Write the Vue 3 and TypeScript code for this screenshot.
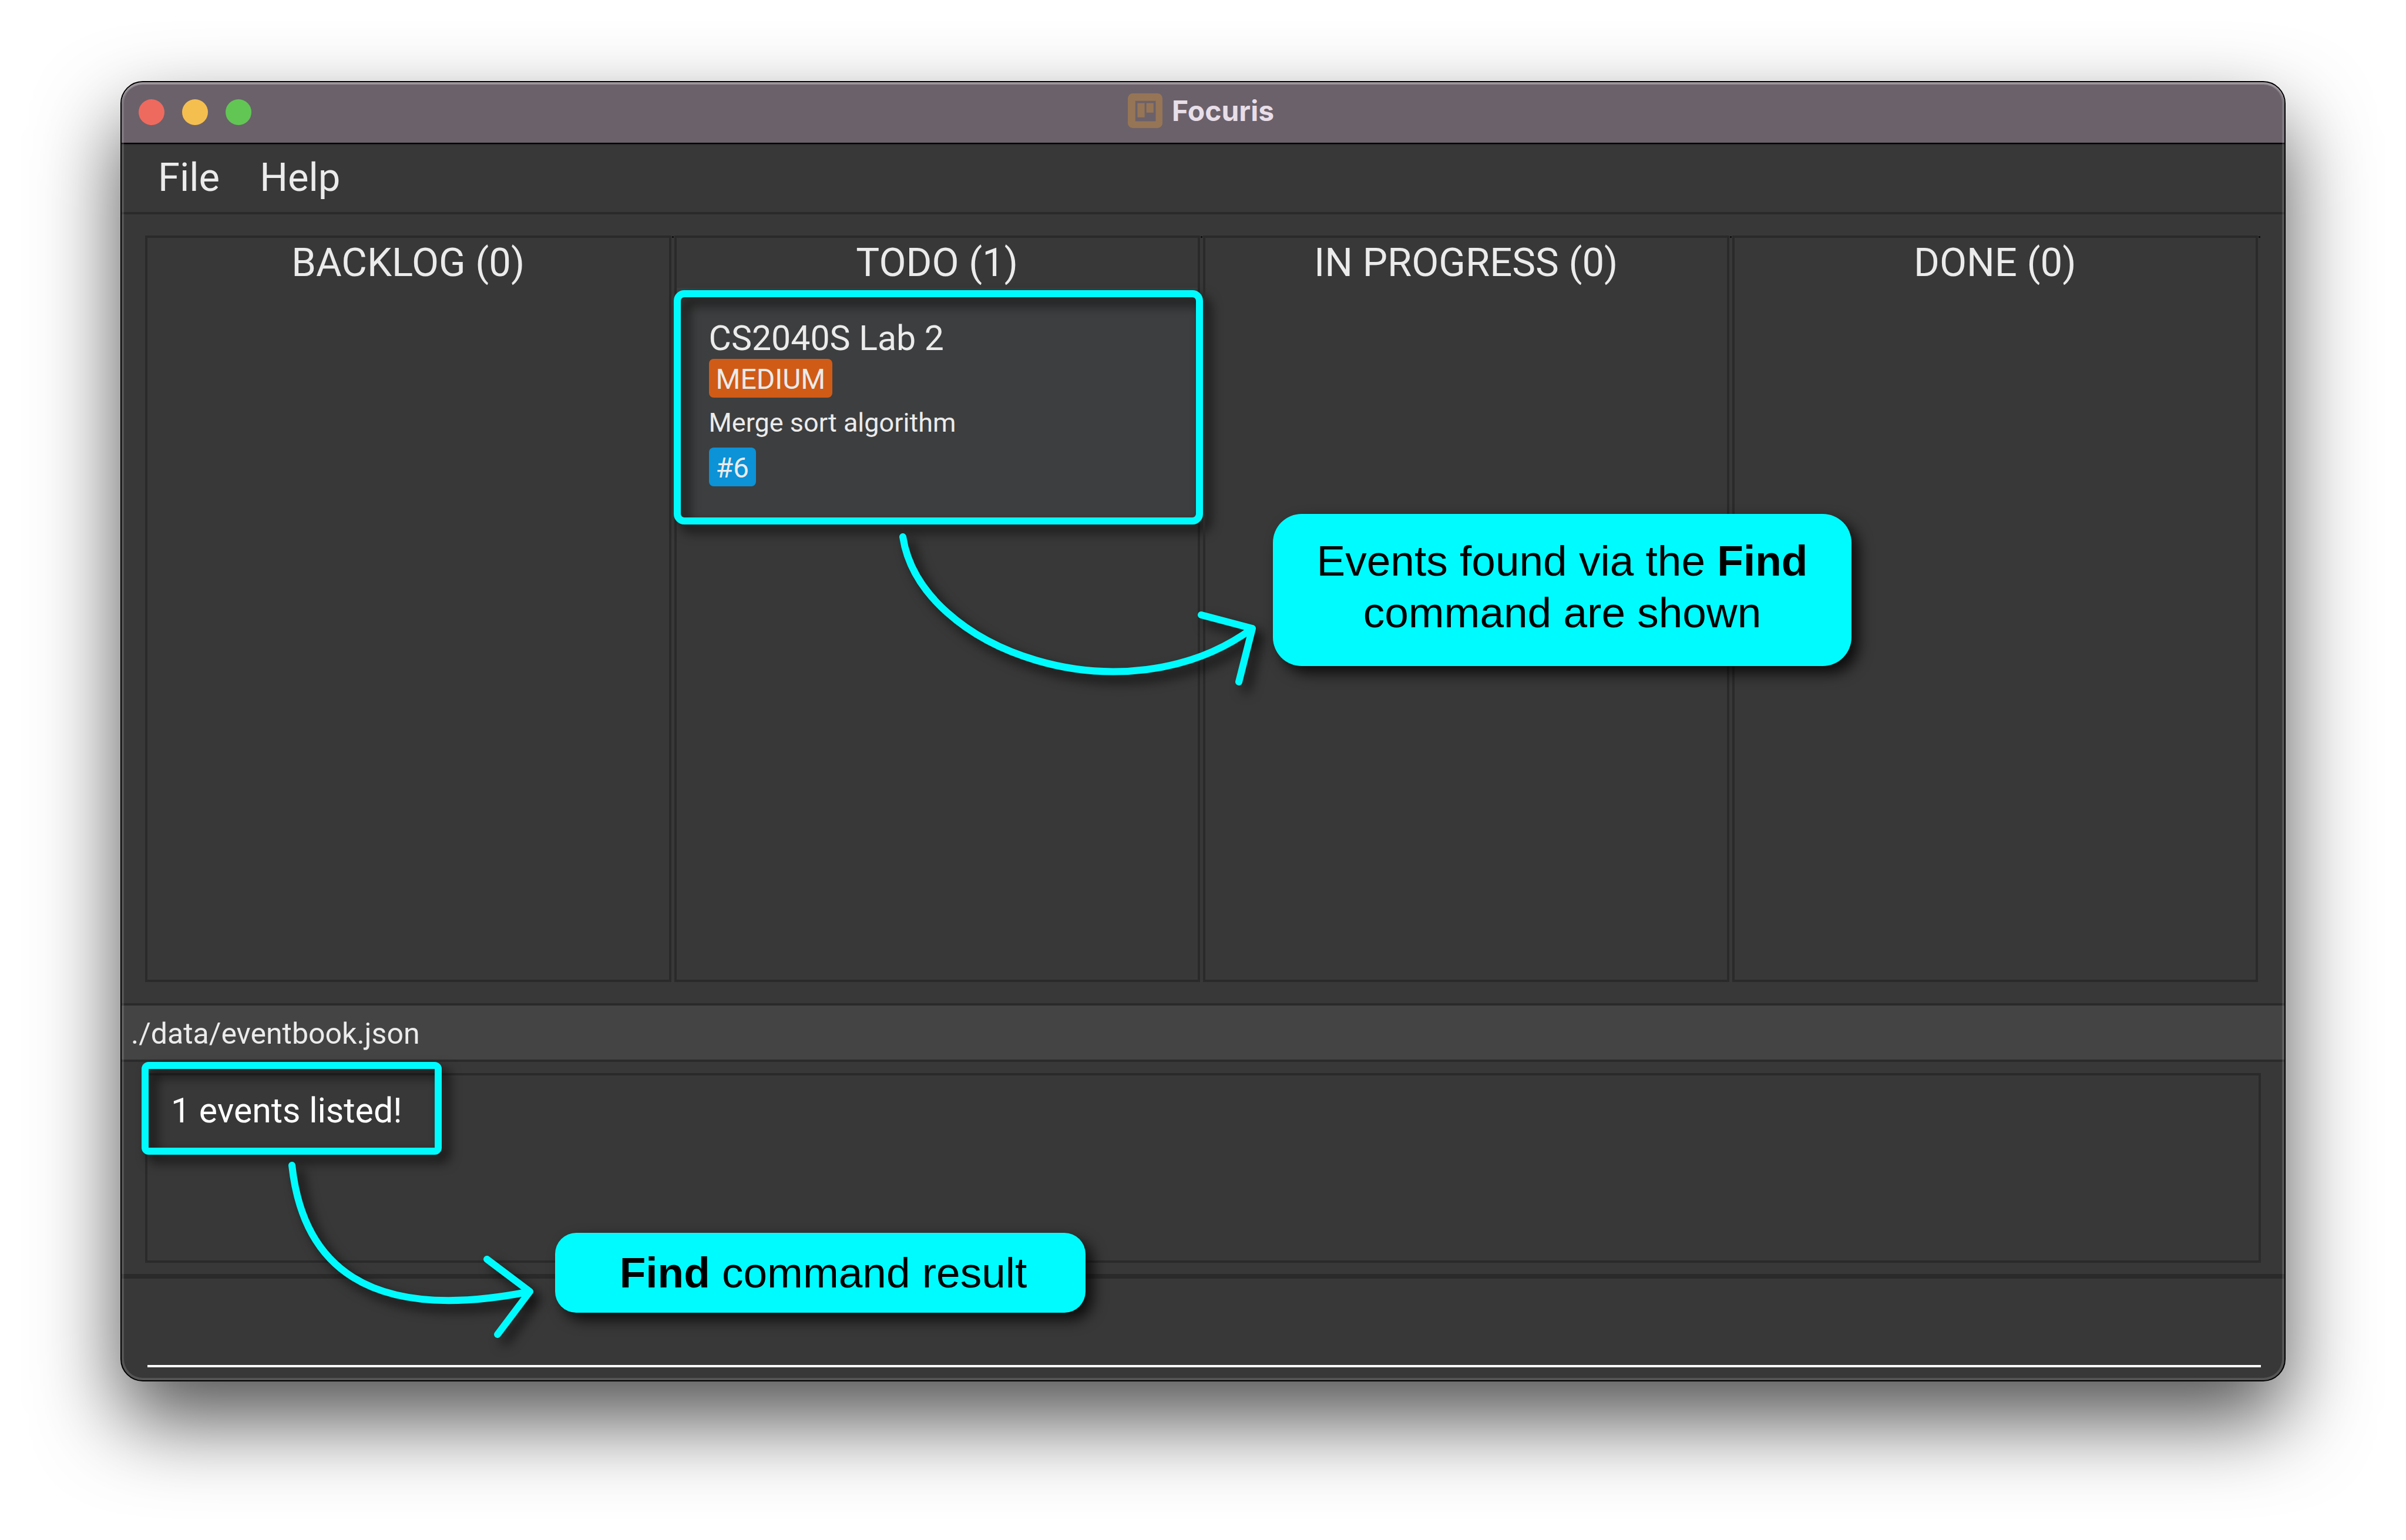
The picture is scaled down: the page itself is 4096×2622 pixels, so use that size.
<script setup lang="ts">
import { computed, ref } from 'vue'

interface EventCard {
  title: string
  priority: string
  description: string
  tags: string[]
}

interface Column {
  name: string
  events: EventCard[]
}

const menus = ['File', 'Help']
const windowControls = [
  { name: 'Close', tone: 'close' },
  { name: 'Minimise', tone: 'minimise' },
  { name: 'Zoom', tone: 'zoom' },
]

const columns = ref<Column[]>([
  { name: 'BACKLOG', events: [] },
  {
    name: 'TODO',
    events: [
      {
        title: 'CS2040S Lab 2',
        priority: 'MEDIUM',
        description: 'Merge sort algorithm',
        tags: ['#6'],
      },
    ],
  },
  { name: 'IN PROGRESS', events: [] },
  { name: 'DONE', events: [] },
])

const eventCount = computed(() => columns.value.reduce((sum, c) => sum + c.events.length, 0))
const result = computed(() => `${eventCount.value} events listed!`)
const savePath = './data/eventbook.json'
const command = ref('')
</script>

<template>
  <div class="desktop">
    <main class="window">
      <header class="titlebar">
        <div class="controls">
          <button
            v-for="control in windowControls"
            :key="control.tone"
            type="button"
            class="control"
            :class="control.tone"
            :aria-label="control.name"
          ></button>
        </div>
        <h1 class="title">
          <svg class="app-icon" viewBox="0 0 97 97" aria-hidden="true">
            <path
              fill="#967556"
              fill-rule="evenodd"
              d="M14 0H83A14 14 0 0 1 97 14V83A14 14 0 0 1 83 97H14A14 14 0 0 1 0 83V14A14 14 0 0 1 14 0ZM21 21V78H78V21ZM27 27H47V67H27ZM52 27H72V54H52Z"
            />
          </svg>
          Focuris
        </h1>
      </header>

      <nav class="menubar">
        <button v-for="menu in menus" :key="menu" type="button" class="menu">{{ menu }}</button>
      </nav>

      <div class="board">
        <section v-for="column in columns" :key="column.name" class="cell">
          <div class="column">
            <h2 class="column-title">{{ column.name }} ({{ column.events.length }})</h2>
            <article v-for="event in column.events" :key="event.title" class="card">
              <h3 class="card-title">{{ event.title }}</h3>
              <span class="badge priority">{{ event.priority }}</span>
              <p class="description">{{ event.description }}</p>
              <span v-for="tag in event.tags" :key="tag" class="badge tag">{{ tag }}</span>
              <span class="highlight card-highlight"></span>
            </article>
          </div>
        </section>
      </div>

      <footer class="statusbar">{{ savePath }}</footer>

      <section class="result">
        <textarea class="result-text" aria-label="Command result" readonly :value="result"></textarea>
        <span class="highlight result-highlight"></span>
      </section>

      <form class="command" @submit.prevent>
        <input v-model="command" class="command-input" type="text" aria-label="Command" />
      </form>

      <svg class="arrow card-arrow" viewBox="0 0 640 280" aria-hidden="true">
        <path d="M20 20C50 214 398 335 615 176M528 153L615 176L592 267" />
      </svg>
      <p class="callout card-callout">Events found via the <b>Find</b><br />command are shown</p>

      <svg class="arrow result-arrow" viewBox="0 0 440 320" aria-hidden="true">
        <path d="M20 20C38 186 144 291 425 235M352 180L425 235L370 308" />
      </svg>
      <p class="callout result-callout"><b>Find</b> command result</p>
    </main>
  </div>
</template>

<style>
body {
  margin: 0;
  background: #fff;
}
</style>

<style scoped>
.desktop {
  box-sizing: border-box;
  display: flex;
  min-height: 100vh;
  padding: 138px 205px 270px;
  font-family: Roboto, 'Liberation Sans', sans-serif;
  color: #ebebeb;
}

.desktop *,
.desktop *::before,
.desktop *::after {
  box-sizing: border-box;
}

h1,
h2,
h3,
p {
  margin: 0;
  font-weight: 400;
}

button {
  padding: 0;
  border: 0;
  background: none;
  color: inherit;
  font: inherit;
}

.window {
  position: relative;
  display: flex;
  flex: 1;
  flex-direction: column;
  border: 2px solid #000;
  border-radius: 38px;
  background: #383838;
  box-shadow: 0 66px 142px rgba(0, 0, 0, 0.68);
}

/* Light rim just inside the window edge. */
.window::after {
  content: '';
  position: absolute;
  inset: 0;
  border-radius: 36px;
  box-shadow:
    inset 0 2px 0 rgba(255, 255, 255, 0.16),
    inset 0 4px 0 rgba(255, 255, 255, 0.16),
    inset 0 0 0 4px rgba(255, 255, 255, 0.14);
  pointer-events: none;
}

.titlebar {
  display: grid;
  grid-template-columns: 1fr auto 1fr;
  align-items: center;
  height: 105px;
  padding: 0 36px 2px 29px;
  border-bottom: 2px solid #000;
  border-radius: 36px 36px 0 0;
  background: #6b616a;
}

.controls {
  display: flex;
  gap: 30px;
}

.control {
  width: 44px;
  height: 44px;
  border-radius: 50%;
}

.close {
  background: #ee6a5f;
}

.minimise {
  background: #f5bf4f;
}

.zoom {
  background: #62c655;
}

.title {
  display: flex;
  align-items: center;
  gap: 16px;
  padding-bottom: 4px;
  color: #e8dee8;
  font-family: Inter, 'Liberation Sans', sans-serif;
  font-size: 48px;
  font-weight: 700;
  line-height: 60px;
}

.app-icon {
  width: 59px;
  height: 59px;
}

.menubar {
  display: flex;
  align-items: center;
  gap: 68px;
  height: 120px;
  padding: 0 62px 4px;
  border-top: 2px solid #2a2a2a;
  border-bottom: 4px solid #2a2a2a;
}

.menu {
  font-size: 67px;
  line-height: 84px;
}

.board {
  display: flex;
  flex: 1;
  padding: 36px 40px;
}

.cell {
  position: relative;
  display: flex;
  flex: 1;
  padding-right: 5px;
}

/* Scroll-pane corner mark. */
.cell::after {
  content: '';
  position: absolute;
  top: 1px;
  right: 1px;
  width: 3px;
  height: 3px;
  background: #111;
}

.column {
  flex: 1;
  border: 4px solid #2a2a2a;
}

.column-title {
  font-size: 67px;
  line-height: 85px;
  text-align: center;
}

.card {
  position: relative;
  display: flex;
  flex-direction: column;
  align-items: flex-start;
  padding: 51px 55px 60px;
  background: #3d3e3f;
}

.card-title {
  font-size: 59px;
  line-height: 70px;
}

.badge {
  padding: 3px 12px 0;
  border-radius: 8px;
  font-size: 48px;
  line-height: 63px;
}

.priority {
  background: #d05b17;
}

.tag {
  background: #0b92d7;
}

.description {
  font-size: 45px;
  line-height: 85px;
}

.statusbar {
  height: 100px;
  padding: 2px 16px 0;
  border-top: 4px solid #2a2a2a;
  border-bottom: 4px solid #2a2a2a;
  background: #444;
  font-size: 50px;
  line-height: 92px;
}

.result {
  position: relative;
  padding: 19px 40px;
}

.result-text {
  display: block;
  width: 100%;
  height: 323px;
  padding: 22px 40px;
  border: 4px solid #2a2a2a;
  border-radius: 0;
  outline: 0;
  background: transparent;
  color: #fff;
  font: inherit;
  font-size: 59px;
  line-height: 76px;
  resize: none;
}

.command {
  padding: 0 40px 22px 44px;
  border-top: 8px solid #2a2a2a;
}

.command-input {
  display: block;
  width: 100%;
  height: 151px;
  padding: 0 16px;
  border: 0;
  border-bottom: 4px solid #fff;
  outline: 0;
  background: transparent;
  color: #fff;
  font: inherit;
  font-size: 59px;
}

/* Annotations laid over the window. */
.highlight {
  position: absolute;
  border: 12px solid #00fbff;
  filter: drop-shadow(12px 12px 10px rgba(0, 0, 0, 0.75));
  pointer-events: none;
}

.card-highlight {
  inset: 4px -9px -5px -5px;
  border-radius: 18px;
}

.result-highlight {
  top: 0;
  left: 34px;
  width: 511px;
  height: 158px;
  border-radius: 12px;
}

.arrow {
  position: absolute;
  overflow: visible;
  fill: none;
  stroke: #00fbff;
  stroke-width: 12px;
  stroke-linecap: round;
  stroke-linejoin: round;
  filter: drop-shadow(12px 12px 10px rgba(0, 0, 0, 0.75));
  pointer-events: none;
}

.card-arrow {
  top: 754px;
  left: 1310px;
  width: 640px;
  height: 280px;
}

.result-arrow {
  top: 1824px;
  left: 270px;
  width: 440px;
  height: 320px;
}

.callout {
  position: absolute;
  background: #00fbff;
  box-shadow: 12px 12px 24px rgba(0, 0, 0, 0.8);
  color: #000;
  font-family: 'Liberation Sans', Arial, sans-serif;
  font-size: 73px;
  line-height: 88px;
  text-align: center;
}

.card-callout {
  top: 735px;
  left: 1960px;
  width: 985px;
  padding: 36px 0 47px;
  border-radius: 49px;
}

.result-callout {
  top: 1959px;
  left: 738px;
  width: 903px;
  padding: 24px 0 24px 10px;
  border-radius: 36px;
}
</style>
